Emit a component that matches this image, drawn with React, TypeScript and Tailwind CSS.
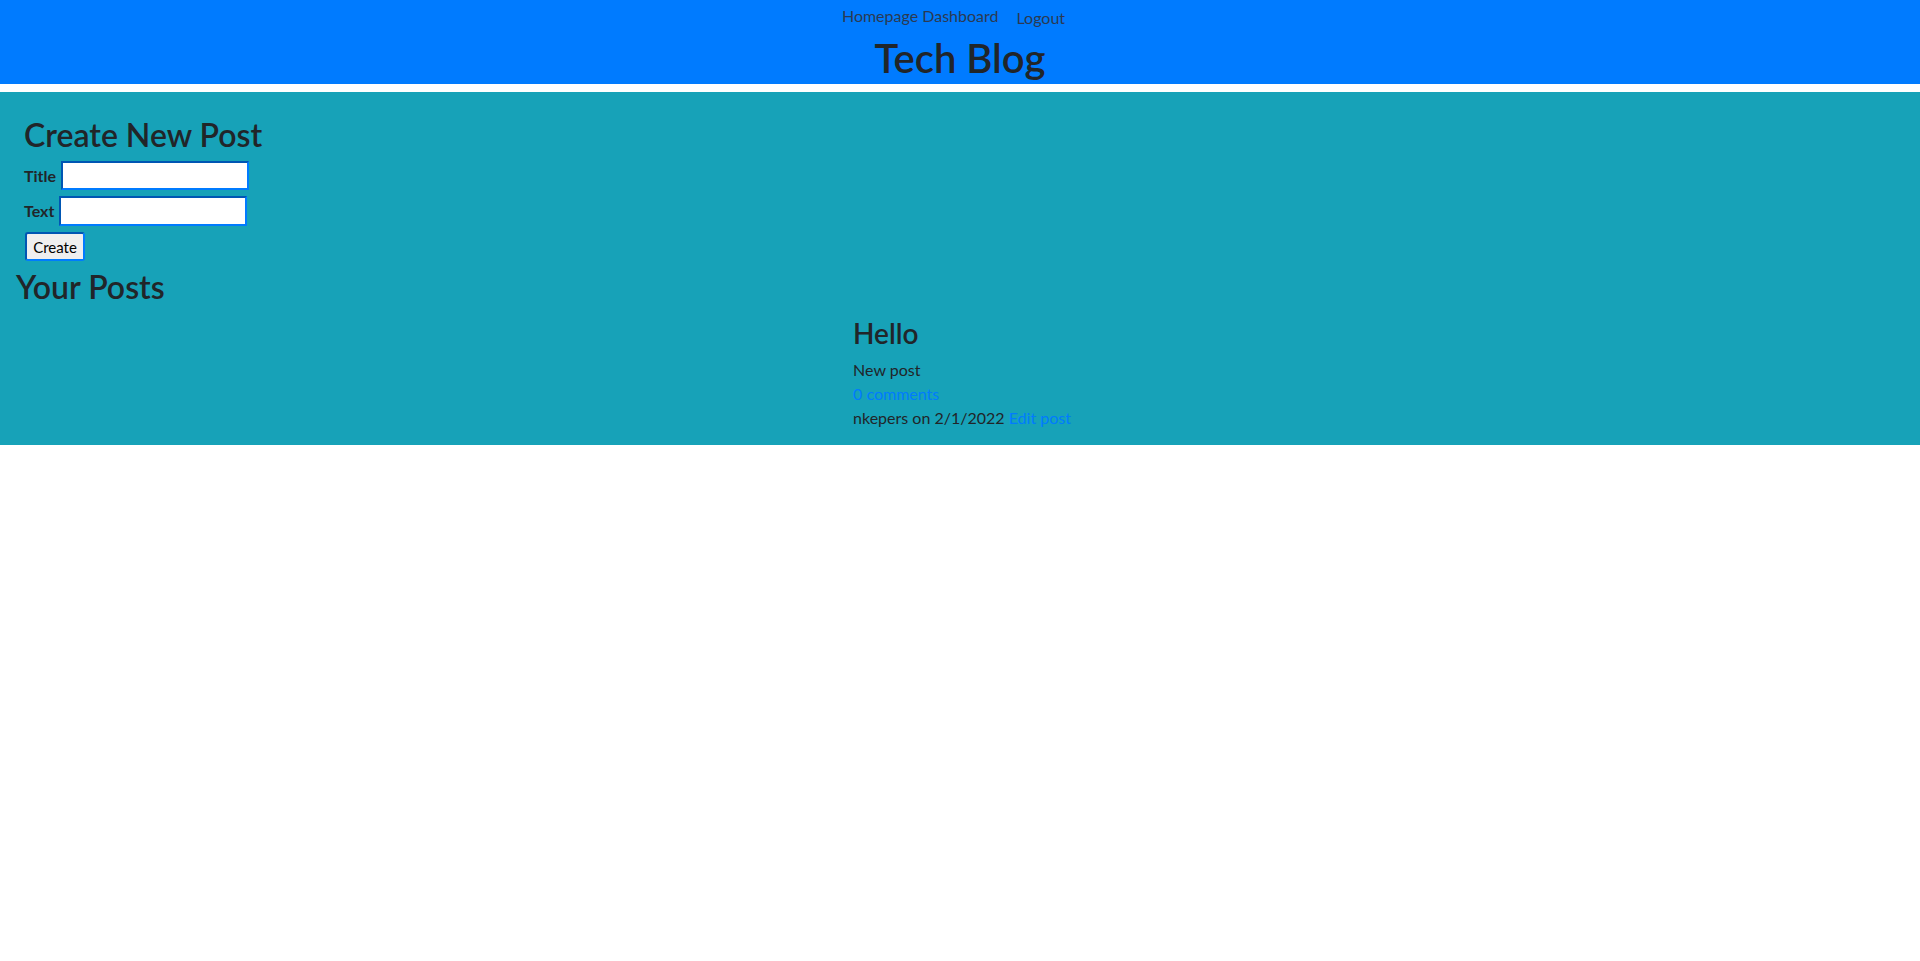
import React from 'react';

const font = { fontFamily: 'Lato, "Noto Sans", sans-serif' };

const fieldBorder =
  'border-2 border-t-[#0056b3] border-l-[#0056b3] border-b-[#007bff] border-r-[#007bff]';

const App = () => {
  return (
    <div className="min-h-screen bg-white text-[#212529]" style={font}>
      {/* Header */}
      <header className="bg-[#007bff] h-[84px] text-center">
        <nav className="flex justify-center items-start gap-[18px] pt-[4px] pr-[13px] text-[16px] text-[#2b3a52]">
          <div>
            <a href="#" className="leading-6">Homepage</a>{' '}
            <a href="#" className="leading-6">Dashboard</a>
          </div>
          <button className="leading-6 mt-[2px]">Logout</button>
        </nav>
        <h1 className="text-[40px] font-semibold leading-[1.2] mt-[4px]">Tech Blog</h1>
      </header>

      {/* Main */}
      <main className="mt-2 bg-[#17a2b8] pt-[24px] px-4 pb-[15px]">
        <form className="px-2">
          <h2 className="text-[32px] font-semibold leading-[1.2] mb-[7px]">Create New Post</h2>
          <div className="flex items-center gap-[5px] h-[29px] mb-[6px]">
            <label className="font-bold text-[16px]">Title</label>
            <input className={`w-[188px] h-[29px] bg-white ${fieldBorder}`} />
          </div>
          <div className="flex items-center gap-[5px] h-[30px] mb-[6px]">
            <label className="font-bold text-[16px]">Text</label>
            <input className={`w-[188px] h-[30px] bg-white ${fieldBorder}`} />
          </div>
          <button
            type="button"
            className={`h-[29px] w-[60px] ml-[1px] text-[15px] text-black bg-[#efefef] rounded-[3px] ${fieldBorder}`}
          >
            Create
          </button>
        </form>

        <h2 className="text-[32px] font-semibold leading-[1.2] mt-[7px]">Your Posts</h2>

        <div className="flex justify-center mt-[10px]">
          <div className="ml-[4px]">
            <h3 className="text-[28px] font-semibold leading-[1.2] mb-[8px]">Hello</h3>
            <p className="leading-6">New post</p>
            <p className="leading-6">
              <a href="#" className="text-[#007bff]">0 comments</a>
            </p>
            <p className="leading-6">
              nkepers on 2/1/2022{' '}
              <a href="#" className="text-[#007bff]">Edit post</a>
            </p>
          </div>
        </div>
      </main>
    </div>
  );
};

export default App;
